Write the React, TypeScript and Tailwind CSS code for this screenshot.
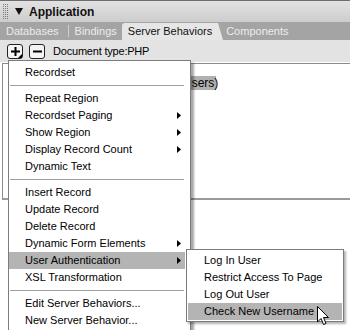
import React from "react"

type Item = { label: string; sub?: boolean; active?: boolean } | "sep"

const MENU: Item[] = [
  { label: "Recordset" },
  "sep",
  { label: "Repeat Region" },
  { label: "Recordset Paging", sub: true },
  { label: "Show Region", sub: true },
  { label: "Display Record Count", sub: true },
  { label: "Dynamic Text" },
  "sep",
  { label: "Insert Record" },
  { label: "Update Record" },
  { label: "Delete Record" },
  { label: "Dynamic Form Elements", sub: true },
  { label: "User Authentication", sub: true, active: true },
  { label: "XSL Transformation" },
  "sep",
  { label: "Edit Server Behaviors..." },
  { label: "New Server Behavior..." },
]

const SUBMENU: Item[] = [
  { label: "Log In User" },
  { label: "Restrict Access To Page" },
  { label: "Log Out User" },
  { label: "Check New Username", active: true },
]

function Arrow() {
  return (
    <svg width="4" height="7" viewBox="0 0 4 7" className="absolute right-[4px] top-[5px]">
      <path d="M0 0 L4 3.5 L0 7 Z" fill="#000" />
    </svg>
  )
}

function MenuRows({ items }: { items: Item[] }) {
  return (
    <>
      {items.map((item, i) =>
        item === "sep" ? (
          <div key={i} className="h-[9px] flex flex-col justify-center px-[1px]">
            <div className="h-px bg-[#a0a0a0]" />
            <div className="h-px bg-white" />
          </div>
        ) : (
          <div
            key={i}
            className={
              "relative h-[17px] leading-[17px] pl-[16px] whitespace-nowrap " +
              (item.active ? "bg-[#b4b4b4]" : "")
            }
          >
            {item.label}
            {item.sub && <Arrow />}
          </div>
        )
      )}
    </>
  )
}

function Grip() {
  return (
    <div className="flex gap-[1px] h-[15px]">
      <div className="w-[1px] border-l border-dotted border-[#777]" />
      <div className="w-[1px] border-l border-dotted border-[#777]" />
      <div className="w-[1px] border-l border-dotted border-[#777]" />
    </div>
  )
}

function ToolButton({ sign }: { sign: "+" | "-" }) {
  return (
    <div className="relative w-[16px] h-[15px] rounded-[3px] border border-[#222] bg-[#f4f4f4] flex items-center justify-center">
      <svg width="9" height="9" viewBox="0 0 9 9">
        <rect x="0" y="3.5" width="9" height="2" fill="#000" />
        {sign === "+" && <rect x="3.5" y="0" width="2" height="9" fill="#000" />}
      </svg>
      {sign === "+" && (
        <svg width="4" height="4" viewBox="0 0 4 4" className="absolute right-[0px] bottom-[0px]">
          <path d="M4 0 L4 4 L0 4 Z" fill="#000" />
        </svg>
      )}
    </div>
  )
}

export default function App() {
  return (
    <div
      className="relative w-[350px] h-[330px] overflow-hidden bg-white text-[11px] text-black"
      style={{ fontFamily: '"Liberation Sans", Arial, sans-serif' }}
    >
      {/* Panel header */}
      <div className="h-[22px] border-t border-[#6e6e6e] bg-gradient-to-b from-[#e2e2e2] to-[#cdcdcd] flex items-center pl-[3px]">
        <Grip />
        <svg width="8" height="7" viewBox="0 0 8 7" className="ml-[7px]">
          <path d="M0 0 L8 0 L4 7 Z" fill="#111" />
        </svg>
        <span className="ml-[6px] font-bold text-[12px] text-[#111]">Application</span>
      </div>

      {/* Tabs */}
      <div className="h-[18px] bg-[#a4a4a4] flex items-end text-[11px]">
        <div className="pl-[6px] pr-[9px] h-full flex items-center text-[#ececec]">Databases</div>
        <div className="w-px h-[12px] bg-[#d0d0d0] self-center" />
        <div className="pl-[6px] pr-[4px] h-full flex items-center text-[#ececec]">Bindings</div>
        <div className="relative ml-[1px] h-[17px] pl-[6px] pr-[5px] bg-[#e6e6e6] rounded-tl-[3px] flex items-center text-[#111]">
          Server Behaviors
          <svg width="6" height="17" viewBox="0 0 6 17" className="absolute right-[-6px] top-0">
            <path d="M0 0 L1 0 L6 17 L0 17 Z" fill="#e6e6e6" />
          </svg>
        </div>
        <div className="pl-[9px] h-full flex items-center text-[#ececec]">Components</div>
      </div>

      {/* Toolbar */}
      <div className="h-[22px] bg-[#e3e3e3] flex items-center pl-[7px] gap-[6px] text-[11px]">
        <ToolButton sign="+" />
        <ToolButton sign="-" />
        <span className="ml-[2px] tracking-[-0.2px]">Document type:PHP</span>
      </div>

      {/* Content */}
      <div className="pl-[2px] pt-[1px]">
        <div className="h-[137px] border-t border-l border-[#8c8c8c] border-b-2 border-b-[#9a9a9a] bg-white pt-[12px]">
          <div className="ml-[108px] w-[105px] h-[14px] leading-[14px] bg-[#b0b0b0] pr-[2px] text-[12px] whitespace-nowrap text-right">
            Recordset (rsUsers)
          </div>
        </div>
      </div>

      {/* Main menu */}
      <div className="absolute left-[8px] top-[60px] w-[183px] pb-[6px] pt-[3px] pl-0 pr-[5px] bg-white border border-[#7c7c7c] shadow-[3px_3px_2px_rgba(0,0,0,0.35)] text-[11px]">
        <MenuRows items={MENU} />
      </div>

      {/* Sub menu */}
      <div className="absolute left-[186px] top-[249px] w-[158px] pt-[2px] pb-[1px] px-[1px] bg-white border border-[#7c7c7c] shadow-[2px_2px_2px_rgba(0,0,0,0.3)] text-[11px]">
        <MenuRows items={SUBMENU} />
      </div>

      {/* Mouse cursor */}
      <svg width="13" height="20" viewBox="0 0 13 20" className="absolute left-[317px] top-[306px]">
        <path d="M0.5 0.5 L0.5 16 L4 12.5 L6.5 18.5 L9 17.5 L6.5 11.5 L11.5 11.5 Z" fill="#fff" stroke="#000" strokeWidth="1" />
      </svg>
    </div>
  )
}
